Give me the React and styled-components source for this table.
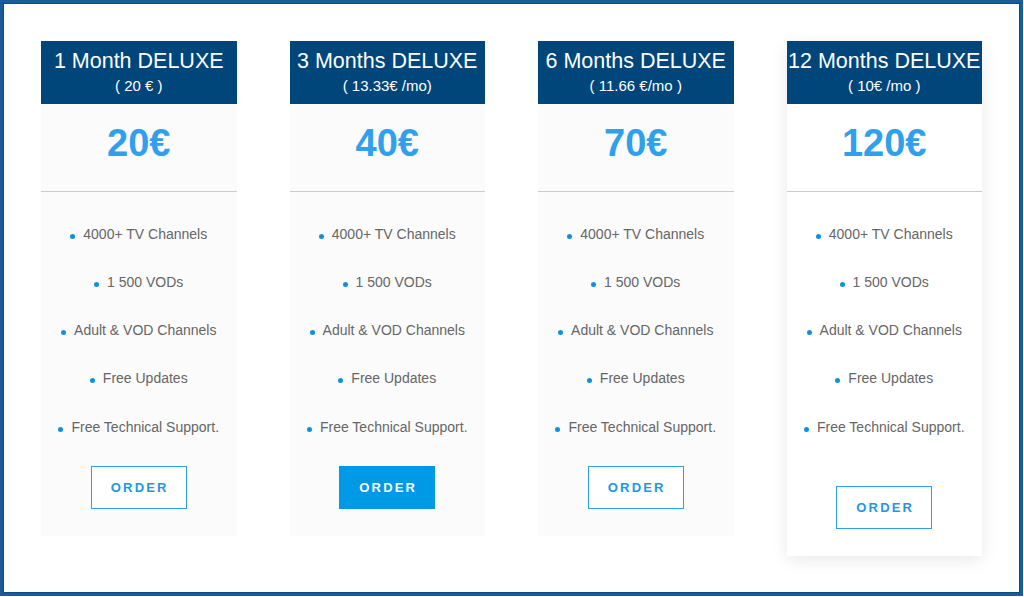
import React from "react";
import styled, { createGlobalStyle } from "styled-components";

const Global = createGlobalStyle`
  html, body { margin: 0; padding: 0; background: #fff; }
  body { font-family: "Liberation Sans", Arial, sans-serif; }
  * { box-sizing: border-box; }
`;

const Frame = styled.div`
  width: 1023px;
  height: 596px;
  border: 3px solid #1a5c98;
  box-shadow: inset 0 0 0 1px #0f4a80;
  padding-top: 38px;
  display: flex;
  justify-content: center;
  align-items: flex-start;
`;

const Grid = styled.div`
  display: grid;
  grid-template-columns: repeat(4, 195.5px);
  column-gap: 53px;
  align-items: start;
`;

const Card = styled.div`
  background: ${(p) => (p.$featured ? "#ffffff" : "#fbfbfb")};
  box-shadow: ${(p) => (p.$featured ? "0 4px 16px rgba(0,0,0,0.09)" : "none")};
  display: flex;
  flex-direction: column;
  align-items: stretch;
  padding-bottom: 27.5px;
`;

const Header = styled.div`
  height: 63px;
  background: #00467a;
  color: #fff;
  text-align: center;
  padding-top: 8px;
`;

const Title = styled.div`
  font-size: 21.5px;
  line-height: 24px;
  white-space: nowrap;
  margin-bottom: 4px;
`;

const Sub = styled.div`
  font-size: 15px;
  line-height: 18px;
  white-space: nowrap;
`;

const PriceBox = styled.div`
  height: 88px;
  padding-top: 20px;
  text-align: center;
  border-bottom: 1px solid #cbcbcb;
`;

const Price = styled.div`
  font-size: 38px;
  line-height: 38px;
  font-weight: 700;
  color: #31a0ec;
`;

const Features = styled.ul`
  list-style: none;
  margin: 0;
  padding: 31.5px 0 0;
  display: flex;
  flex-direction: column;
  gap: 28.25px;
`;

const Feature = styled.li`
  font-size: 14px;
  line-height: 20px;
  color: #666;
  text-align: center;
  white-space: nowrap;
  &::before {
    content: "";
    display: inline-block;
    width: 5px;
    height: 5px;
    border-radius: 50%;
    background: #0a92e2;
    margin-right: 8px;
  }
`;

const ButtonRow = styled.div`
  display: flex;
  justify-content: center;
  margin-top: ${(p) => (p.$featured ? "49px" : "29px")};
`;

const OrderButton = styled.button`
  width: 96px;
  height: 43px;
  font-family: "Liberation Sans", Arial, sans-serif;
  font-size: 13px;
  font-weight: 700;
  letter-spacing: 2.2px;
  padding: 0 0 0 2px;
  cursor: pointer;
  border: 1px solid ${(p) => (p.$filled ? "#0099e5" : "#2a9ff0")};
  background: ${(p) => (p.$filled ? "#0099e5" : "#ffffff")};
  color: ${(p) => (p.$filled ? "#ffffff" : "#1c98e4")};
`;

const plans = [
  { title: "1 Month DELUXE", sub: "( 20 € )", price: "20€" },
  { title: "3 Months DELUXE", sub: "( 13.33€ /mo)", price: "40€", filled: true },
  { title: "6 Months DELUXE", sub: "( 11.66 €/mo )", price: "70€" },
  { title: "12 Months DELUXE", sub: "( 10€ /mo )", price: "120€", featured: true },
];

const features = [
  "4000+ TV Channels",
  "1 500 VODs",
  "Adult & VOD Channels",
  "Free Updates",
  "Free Technical Support.",
];

export default function App() {
  return (
    <>
      <Global />
      <Frame>
        <Grid>
          {plans.map((p) => (
            <Card key={p.title} $featured={p.featured}>
              <Header>
                <Title>{p.title}</Title>
                <Sub>{p.sub}</Sub>
              </Header>
              <PriceBox>
                <Price>{p.price}</Price>
              </PriceBox>
              <Features>
                {features.map((f) => (
                  <Feature key={f}>{f}</Feature>
                ))}
              </Features>
              <ButtonRow $featured={p.featured}>
                <OrderButton $filled={p.filled}>ORDER</OrderButton>
              </ButtonRow>
            </Card>
          ))}
        </Grid>
      </Frame>
    </>
  );
}
